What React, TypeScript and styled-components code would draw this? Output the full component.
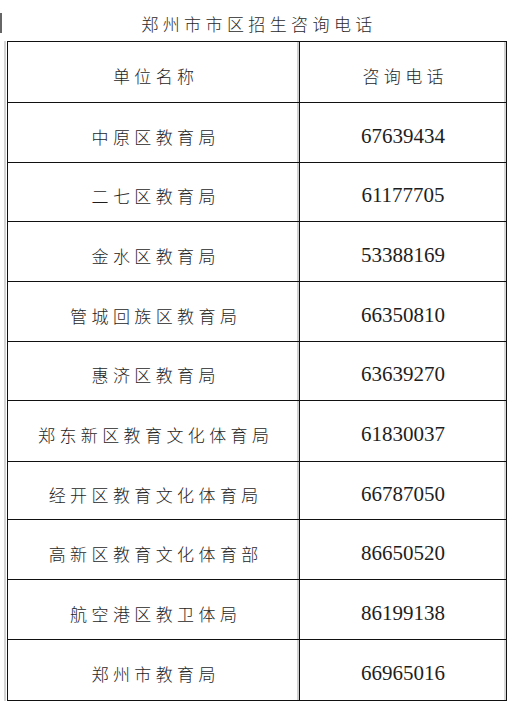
import React from "react";
import styled, { createGlobalStyle } from "styled-components";

const GlobalStyle = createGlobalStyle`
  html, body {
    margin: 0;
    padding: 0;
    background: #ffffff;
  }
  body {
    font-family: "Noto Sans CJK SC", "Noto Sans", sans-serif;
    color: #222;
  }
`;

const Page = styled.div`
  width: 514px;
  height: 702px;
  overflow: hidden;
  padding: 0 7px;
  box-sizing: border-box;
  position: relative;
`;

// scan artifact at the top-left edge
const EdgeMark = styled.div`
  position: absolute;
  left: 0;
  top: 13px;
  width: 2px;
  height: 20px;
  background: #666;
`;

const Title = styled.h1`
  margin: 0;
  height: 41px;
  display: flex;
  align-items: center;
  justify-content: center;
  padding: 6px 0 0 4px;
  box-sizing: border-box;
  font-size: 17px;
  font-weight: 300;
  letter-spacing: 4.4px;
  color: #2a2a2a;
  font-family: "Noto Sans CJK SC", sans-serif;
`;

const Table = styled.div`
  display: grid;
  grid-template-columns: 292px 207px;
  width: 500px;
  border-top: 1px solid #111;
  border-left: 1px solid #111;
  box-sizing: border-box;
  box-shadow: -1px 0 0 #fff, -3px 0 0 #d4d4d4;
`;

const Cell = styled.div<{ $h: number; $num?: boolean }>`
  height: ${(p) => p.$h}px;
  box-sizing: border-box;
  border-right: 1px solid #111;
  border-bottom: 1px solid #111;
  display: flex;
  align-items: center;
  justify-content: center;
  padding-top: 7px;
  box-shadow: inset -2px 0 0 ${(p) => (p.$num ? "#d8d8d8" : "#d0d0d0")};
  font-family: ${(p) =>
    p.$num
      ? `"Liberation Serif", "Times New Roman", serif`
      : `"Noto Sans CJK SC", sans-serif`};
  font-size: ${(p) => (p.$num ? "21px" : "17px")};
  font-weight: ${(p) => (p.$num ? 400 : 300)};
  letter-spacing: ${(p) => (p.$num ? "0" : "4.4px")};
  padding-left: ${(p) => (p.$num ? "0" : "4.4px")};
  color: #1e1e1e;
`;

const rows: [string, string, number][] = [
  ["中原区教育局", "67639434", 60],
  ["二七区教育局", "61177705", 59],
  ["金水区教育局", "53388169", 60],
  ["管城回族区教育局", "66350810", 60],
  ["惠济区教育局", "63639270", 59],
  ["郑东新区教育文化体育局", "61830037", 61],
  ["经开区教育文化体育局", "66787050", 58],
  ["高新区教育文化体育部", "86650520", 60],
  ["航空港区教卫体局", "86199138", 60],
  ["郑州市教育局", "66965016", 61],
];

export default function App() {
  return (
    <>
      <GlobalStyle />
      <Page>
        <EdgeMark />
        <Title>郑州市市区招生咨询电话</Title>
        <Table>
          <Cell $h={61}>单位名称</Cell>
          <Cell $h={61}>咨询电话</Cell>
          {rows.map(([name, phone, h]) => (
            <React.Fragment key={name}>
              <Cell $h={h}>{name}</Cell>
              <Cell $h={h} $num>
                {phone}
              </Cell>
            </React.Fragment>
          ))}
        </Table>
      </Page>
    </>
  );
}
